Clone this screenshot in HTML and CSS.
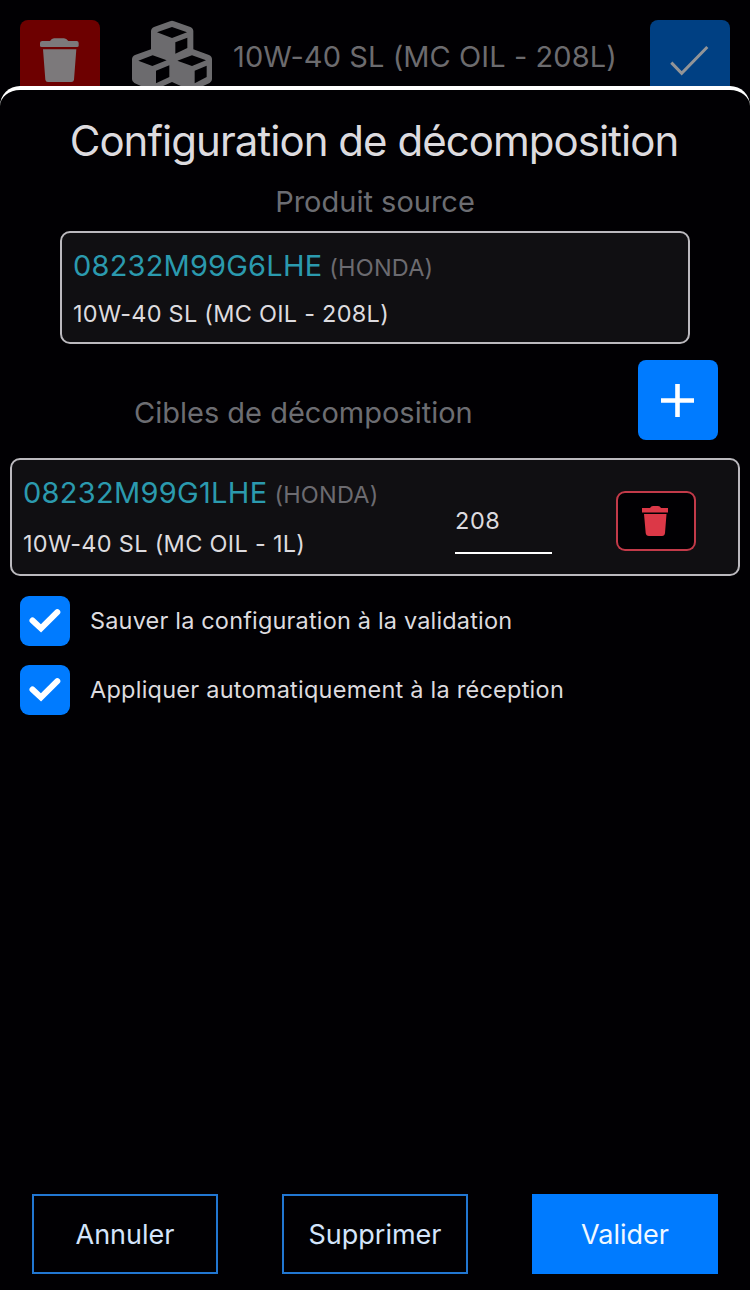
FILE: index.html
```
<!DOCTYPE html>
<html lang="fr">
<head>
<meta charset="utf-8">
<title>Configuration de décomposition</title>
<link rel="stylesheet" href="styles.css">
</head>
<body>
<header class="topbar">
  <div class="tile tile-red">
    <svg viewBox="0 0 240 240"><path d="M67 63H90Q95 55 102 55H132Q139 55 145 63H170Q176 63 176 69V77Q176 81 171 81H65Q60 81 60 77V69Q60 63 67 63ZM69 88H169L162 179Q161 186 154 186H84Q77 186 76 179Z"/></svg>
  </div>
  <svg class="cubes" viewBox="396 60 240 240"><path fill-rule="evenodd" d="M510 64Q516 61 522 64L571 81Q580 85 580 94V148L627 165Q636 169 636 178V238Q636 245 629 249L583 270Q576 273 569 270L516 246L463 270Q456 273 449 270L403 249Q396 245 396 238V178Q396 169 405 165L453 148V94Q453 85 462 81ZM471 97L516 114L561 97L516 81ZM526 127V161L562 144V113ZM415 182L457 198L500 181L458 166ZM468 212V250L508 231V196ZM532 182L576 198L618 181L576 166ZM584 212V250L620 231V197Z"/></svg>
  <span class="topbar-title">10W-40 SL (MC OIL - 208L)</span>
  <div class="tile tile-blue">
    <svg viewBox="0 0 240 240"><path class="line" d="M64 128L95 160L172 81"/></svg>
  </div>
</header>

<main class="sheet">
  <h1 class="title">Configuration de décomposition</h1>
  <h2 class="subtitle source-heading">Produit source</h2>
  <section class="card source">
    <div class="ref"><span class="code">08232M99G6LHE</span><span class="brand">(HONDA)</span></div>
    <div class="desc">10W-40 SL (MC OIL - 208L)</div>
  </section>
  <div class="targets-head">
    <h2 class="subtitle targets-heading">Cibles de décomposition</h2>
    <button class="add"><svg viewBox="0 0 80 80"><path d="M23 40.5H56M39.5 24V57"/></svg></button>
  </div>
  <section class="card target">
    <div class="target-info">
      <div class="ref"><span class="code">08232M99G1LHE</span><span class="brand">(HONDA)</span></div>
      <div class="desc">10W-40 SL (MC OIL - 1L)</div>
    </div>
    <div class="qty">208</div>
    <button class="remove"><svg viewBox="0 0 80 60"><path d="M26 17H34Q35 15 37 15H42Q44 15 45 17H52V21.5H26ZM28 23H50.5L49 42Q48.7 45 46 45H33Q30 45 29.7 42Z"/></svg></button>
  </section>
  <label class="option"><span class="box"><svg viewBox="0 0 50 50"><path d="M12.5 24.5L21 32.4L37.3 16.2"/></svg></span><span class="save-label">Sauver la configuration à la validation</span></label>
  <label class="option"><span class="box"><svg viewBox="0 0 50 50"><path d="M12.5 24.5L21 32.4L37.3 16.2"/></svg></span><span class="auto-label">Appliquer automatiquement à la réception</span></label>
  <footer class="actions">
    <button class="action">Annuler</button>
    <button class="action">Supprimer</button>
    <button class="action primary">Valider</button>
  </footer>
</main>
</body>
</html>
```
FILE: styles.css
```
* { box-sizing: border-box; }
body {
  margin: 0;
  height: 1290px;
  overflow: hidden;
  position: relative;
  background: #010003;
  color: #dddbdf;
  font-family: Inter, "Liberation Sans", sans-serif;
}
h1, h2 { margin: 0; font-weight: 400; }
button { padding: 0; border: 0; font: inherit; }
svg { display: block; }
.topbar { display: flex; padding: 20px 20px 0; color: #6c6b6e; }
.tile { width: 80px; height: 80px; border-radius: 8px; }
.tile path { fill: #7c797b; }
.tile .line { fill: none; stroke: #929497; stroke-width: 9; }
.tile-red { background: #6d0000; }
.tile-blue { background: #004083; margin-left: auto; }
.cubes { width: 80px; height: 80px; margin-left: 32px; fill: #6c6b6e; }
.topbar-title {
  margin-left: 21px;
  line-height: 74px;
  font-size: 29px;
  letter-spacing: .08px;
  white-space: nowrap;
}
.sheet {
  position: absolute;
  inset: 86px 0 0;
  display: flex;
  flex-direction: column;
  border-top: 4px solid #fff;
  border-radius: 20px 20px 0 0;
  background: #010003;
}
.title {
  margin-top: 24px;
  padding-right: 2px;
  text-align: center;
  font-size: 42px;
  line-height: 54px;
  letter-spacing: -.96px;
  white-space: nowrap;
}
.subtitle { color: #6c6d72; font-size: 29px; line-height: 36px; white-space: nowrap; }
.source-heading { margin-top: 16px; text-align: center; }
.card { border: 2px solid #bbb9be; border-radius: 10px; background: #100f12; }
.source { margin: 11px 60px 0; height: 113px; padding: 14px 11px; }
.ref { display: flex; align-items: baseline; line-height: 38px; white-space: nowrap; }
.code { color: #2b9aae; font-size: 29px; letter-spacing: .2px; }
.brand { margin-left: 7px; color: #6c6b70; font-size: 23.5px; letter-spacing: .2px; }
.desc { margin-top: 12px; font-size: 23.5px; line-height: 30px; letter-spacing: .26px; white-space: nowrap; }
.targets-head { display: flex; justify-content: space-between; margin-top: 16px; padding: 0 32px 0 134px; }
.targets-heading { margin-top: 35px; }
.add { width: 80px; height: 80px; border-radius: 8px; background: #007bff; }
.add path { fill: none; stroke: #fff; stroke-width: 4.6; }
.target { display: flex; height: 118px; margin: 18px 10px 0; padding: 0 42px 0 11px; }
.target-info { width: 432px; padding-top: 14px; }
.target .code, .target .desc { letter-spacing: .3px; }
.target .desc { margin-top: 15px; }
.qty {
  width: 97px;
  height: 64px;
  margin-top: 30px;
  padding-top: 15px;
  border-bottom: 2px solid #fff;
  font-size: 23.5px;
  line-height: 32px;
  letter-spacing: .6px;
}
.remove { width: 80px; height: 60px; margin: 31px 0 0 auto; border-radius: 9px; background: #010003; box-shadow: inset 0 0 0 2px #c23a49; }
.remove path { fill: #dc3847; }
.option { display: flex; align-items: center; gap: 20px; margin: 20px 20px 0; height: 50px; font-size: 23.5px; line-height: 30px; white-space: nowrap; }
.option + .option { margin-top: 19px; }
.save-label { letter-spacing: .17px; }
.auto-label { letter-spacing: .24px; }
.box { width: 50px; height: 50px; border-radius: 9px; background: #007bff; }
.box path { fill: none; stroke: #fff; stroke-width: 6; stroke-linecap: round; }
.actions { display: flex; justify-content: space-between; margin: auto 32px 16px; }
.action {
  width: 186px;
  height: 80px;
  border: 2px solid #2277d2;
  background: transparent;
  color: #d4e5fb;
  font-size: 27px;
}
.primary { border-color: #007bff; background: #007bff; color: #f0f8ff; }
```
